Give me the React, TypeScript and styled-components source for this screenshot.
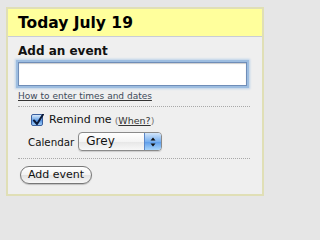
import React, { useState } from "react";
import styled, { createGlobalStyle } from "styled-components";

const GlobalStyle = createGlobalStyle`
  html, body {
    margin: 0;
    padding: 0;
    background: #e6e6e6;
    font-family: "DejaVu Sans", "Liberation Sans", sans-serif;
  }
`;

const App: React.FC<{}> = () => {
  const [title, setTitle] = useState("");
  const [remind, setRemind] = useState(true);
  const [calendar, setCalendar] = useState("Grey");

  return (
    <>
      <GlobalStyle />
      <Panel>
        <Header>Today July 19</Header>
        <Body>
          <Heading>Add an event</Heading>
          <TextField value={title} onChange={e => setTitle(e.target.value)} />
          <HelpLink href="#">How to enter times and dates</HelpLink>
          <Divider space={4} />
          <Row indent={13} space={6}>
            <CheckBox checked={remind} onClick={() => setRemind(!remind)}>
              {remind && (
                <svg width="12" height="12" viewBox="0 0 12 12">
                  <path
                    d="M2 6.5 L5 10 L11 0.5"
                    fill="none"
                    stroke="#0b1a3a"
                    strokeWidth="2"
                    strokeLinecap="round"
                    strokeLinejoin="round"
                  />
                </svg>
              )}
            </CheckBox>
            <Label>Remind me</Label>
            <Hint>
              (<u>When?</u>)
            </Hint>
          </Row>
          <Row indent={10} space={5}>
            <Label size={10.3}>Calendar</Label>
            <Select onClick={() => setCalendar(calendar)}>
              <SelectText>{calendar}</SelectText>
              <SelectArrows>
                <svg width="6" height="10" viewBox="0 0 6 10">
                  <path d="M3 0.5 L5.5 3.5 H0.5 Z" fill="#111" />
                  <path d="M3 9.5 L5.5 6.5 H0.5 Z" fill="#111" />
                </svg>
              </SelectArrows>
            </Select>
          </Row>
          <Divider space={7} />
          <PillButton type="button">Add event</PillButton>
        </Body>
      </Panel>
    </>
  );
};

export default App;

const Panel = styled.div`
  margin: 7px 0 0 6px;
  width: 254px;
  border: 2px solid #e0dfb6;
  background: #efefef;
`;

const Header = styled.div`
  height: 27px;
  background: #ffff9c;
  border-bottom: 1px solid #c9cdd6;
  padding-left: 10px;
  font-size: 15.5px;
  font-weight: bold;
  line-height: 28px;
  color: #000;
`;

const Body = styled.div`
  padding: 7px 0 10px 10px;
  display: flex;
  flex-direction: column;
  align-items: flex-start;
`;

const Heading = styled.div`
  font-size: 12px;
  font-weight: bold;
  color: #111;
  line-height: 14px;
`;

const TextField = styled.input`
  box-sizing: border-box;
  margin-top: 4px;
  width: 229px;
  height: 24px;
  border: 1px solid #6f8db8;
  outline: none;
  background: #fff;
  box-shadow: 0 0 0 2px #9dbde0, 0 0 2px 3px #bcd2ea, inset 0 1px 1px #ccc;
`;

const HelpLink = styled.a`
  margin-top: 4px;
  font-size: 9px;
  line-height: 12px;
  color: #3d4a5a;
  text-decoration: underline;
  text-decoration-color: #333;
`;

const Divider = styled.div<{ space: number }>`
  align-self: stretch;
  margin: ${p => p.space}px 12px 0 0;
  border-top: 1px dotted #a8a8a8;
`;

const Row = styled.div<{ indent: number; space: number }>`
  display: flex;
  align-items: center;
  margin-top: ${p => p.space}px;
  padding-left: ${p => p.indent}px;
`;

const CheckBox = styled.div<{ checked: boolean }>`
  box-sizing: border-box;
  width: 12px;
  height: 12px;
  margin-right: 6px;
  border: 1px solid #3a5f9e;
  border-radius: 2px;
  background: ${p =>
    p.checked
      ? "linear-gradient(#d6e9fb, #6fa7e8 50%, #4f8ee0 51%, #9fcdf8)"
      : "#fff"};
  display: flex;
  align-items: flex-end;
  justify-content: flex-start;
  cursor: pointer;
  svg {
    margin: 0 -2px -1px 0;
  }
`;

const Label = styled.span<{ size?: number }>`
  font-size: ${p => p.size ?? 11}px;
  color: #111;
  line-height: 14px;
`;

const Hint = styled.span`
  margin-left: 3px;
  font-size: 9.5px;
  color: #777;
  u {
    color: #333;
  }
`;

const Select = styled.div`
  box-sizing: border-box;
  margin-left: 4px;
  width: 84px;
  height: 19px;
  border: 1px solid #8a8a8a;
  border-radius: 4px;
  background: linear-gradient(#ffffff, #f4f4f4 50%, #e6e6e6 51%, #f8f8f8);
  box-shadow: 0 1px 1px rgba(0, 0, 0, 0.15);
  display: flex;
  align-items: stretch;
  overflow: hidden;
  cursor: pointer;
`;

const SelectText = styled.span`
  flex: 1;
  padding-left: 7px;
  font-size: 12px;
  line-height: 17px;
  color: #111;
`;

const SelectArrows = styled.span`
  width: 16px;
  border-left: 1px solid #5b87c8;
  background: linear-gradient(#d3e6fb, #79b0ef 50%, #5a9ae9 51%, #a9d5fb);
  display: flex;
  align-items: center;
  justify-content: center;
`;

const PillButton = styled.button`
  margin: 7px 0 0 2px;
  height: 18px;
  padding: 0 7px;
  border: 1px solid #777;
  border-radius: 9px;
  background: linear-gradient(#ffffff, #f2f2f2 50%, #e2e2e2 51%, #f7f7f7);
  box-shadow: 0 1px 1px rgba(0, 0, 0, 0.2);
  font-family: "DejaVu Sans", "Liberation Sans", sans-serif;
  font-size: 11px;
  color: #111;
  line-height: 16px;
`;
